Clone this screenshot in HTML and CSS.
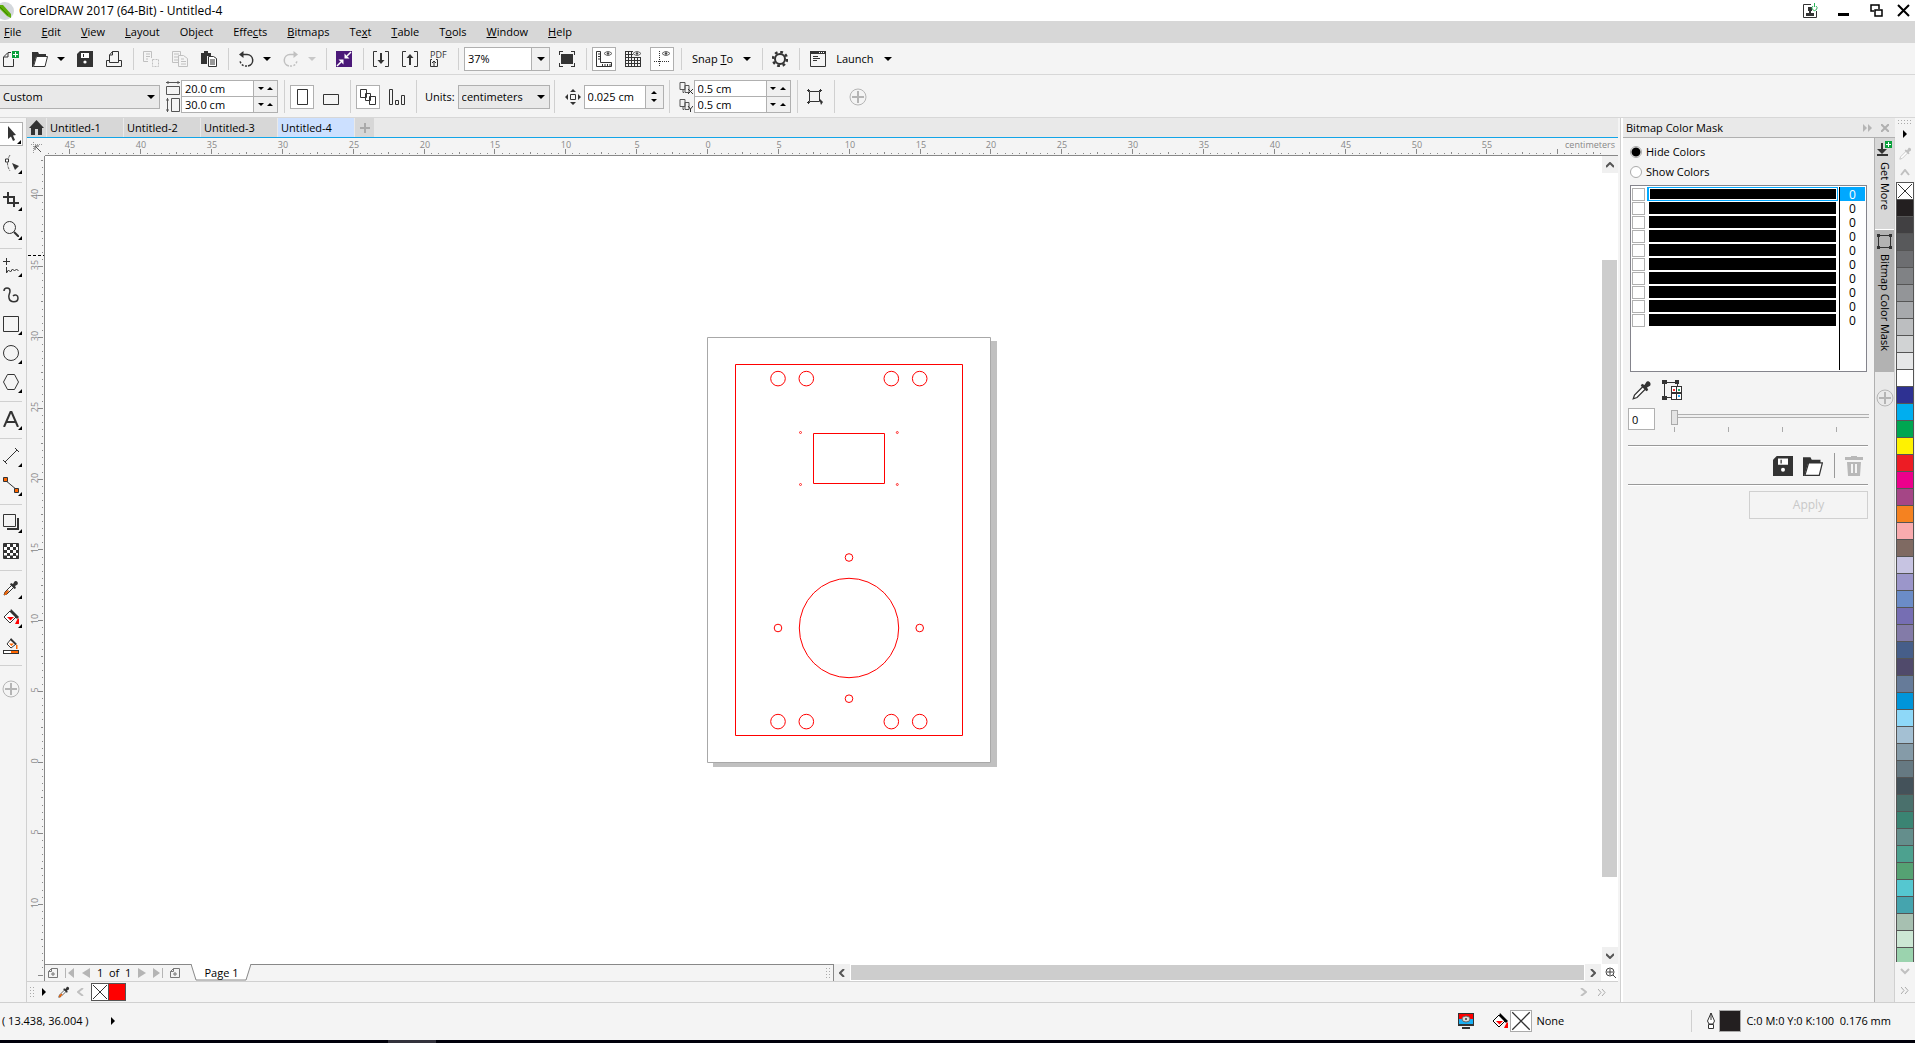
FILE: index.html
```html
<!DOCTYPE html>
<html lang="en">
<head>
<meta charset="utf-8">
<title>CorelDRAW 2017 (64-Bit) - Untitled-4</title>
<link rel="stylesheet" href="styles.css">
</head>
<body>
<svg class="defs" aria-hidden="true">
  <symbol id="i-dropper" viewBox="0 0 16 16"><path d="M1 15l1-3 7-7 2 2-7 7z" fill="#fff" stroke="currentColor"/><path d="M8 3l2 1 1.500-2.500c1-1.500 4.500.500 3 3L12 6l1 2-1.500 1L7 4.500z" fill="currentColor"/></symbol>
  <symbol id="i-save" viewBox="0 0 16 16"><path d="M3 0h13v16H0V3z" fill="currentColor"/><path d="M4 2h8v5H4z" fill="#fff"/><path d="M6 3h1v3H6z" fill="currentColor"/><circle cx="8" cy="11" r="1.600" fill="#fff"/></symbol>
  <symbol id="i-open" viewBox="0 0 16 16"><path d="M0 1h6l1 2h7v3H4L1 16H0z" fill="currentColor"/><path d="M4.500 5.500h11l-2.500 10H1.500z" fill="#fff" stroke="currentColor"/></symbol>
  <symbol id="i-fill" viewBox="0 0 16 16"><path d="M7 2l6 6-6 6-6-6z" fill="#fff" stroke="currentColor"/><path d="M8 0l8 8-2 2-7-7z" fill="currentColor"/><path d="M4 8h7l-3.500 3.500z" fill="#f00"/><path d="M15 9l1 1v5h-4z" fill="#f00"/></symbol>
  <symbol id="i-plus" viewBox="0 0 18 18"><circle cx="9" cy="9" r="8" fill="none" stroke="#b5b5b5"/><path d="M9 3v12M3 9h12" stroke="#b5b5b5" stroke-width="2"/></symbol>
  <symbol id="i-none" viewBox="0 0 16 16"><path d="M0 0h16v16H0z" fill="#fff"/><path d="M1 1l14 14M15 1L1 15" stroke="#333"/></symbol>
  <symbol id="i-addpage" viewBox="0 0 10 10"><path d="M3.500.500h6v9h-9v-6zM3.500.500v3h-3M5 4v4M3 6h4" fill="none" stroke="#777"/></symbol>
  <symbol id="i-dup" viewBox="0 0 14 13"><path d="M1 1h5v7H1zM4 8v3h1M6 4h4v7H6z" fill="none" stroke="#555"/></symbol>
</svg>

<header class="titlebar">
  <svg class="logo" viewBox="0 0 14 18"><circle cx="5" cy="9" r="9" fill="#d4d8dc"/><path d="M-2 3L3 3l8 9v4l-4-2-8-8z" fill="#5cad08"/><path d="M0 5l8 8" stroke="#3d8500"/></svg>
  <h1 class="title">CorelDRAW 2017 (64-Bit) - Untitled-4</h1>
  <div class="window-buttons">
    <button aria-label="Account"><svg width="15" height="16" viewBox="0 0 15 16"><path d="M8 1.500H.500v13h13V8" fill="none" stroke="#333"/><path d="M5 4h4v4H8v2h3v3H3v-3h3V8H5z" fill="#333"/><path d="M10 3a2.500 2.500 0 1 0 3 0M11.500 0v4" fill="none" stroke="#2bb45a"/></svg></button>
    <button aria-label="Minimize"><svg width="12" height="14"><path d="M0 9h11v3H0z"/></svg></button>
    <button aria-label="Restore"><svg width="13" height="14"><path d="M4 7H1V1h8v4M5 6h7v6H5z" fill="none" stroke="#000" stroke-width="1.500"/></svg></button>
    <button class="close" aria-label="Close"><svg width="13" height="14"><path d="M1 1l11 11M12 1L1 12" stroke="#000" stroke-width="2"/></svg></button>
  </div>
</header>

<nav class="menubar">
  <button><u>F</u>ile</button><button><u>E</u>dit</button><button><u>V</u>iew</button><button><u>L</u>ayout</button><button>Ob<u>j</u>ect</button><button>Effe<u>c</u>ts</button><button><u>B</u>itmaps</button><button>Te<u>x</u>t</button><button><u>T</u>able</button><button>T<u>o</u>ols</button><button><u>W</u>indow</button><button><u>H</u>elp</button>
</nav>

<div class="toolbar">
  <button class="icon edge" aria-label="New"><svg viewBox="0 0 16 16"><path d="M8 1.500H5L.500 6v9.500h10V8M5 2v4H1" fill="none" stroke="currentColor"/><path d="M9 0h7v7H9z" fill="#0aa03c"/><path d="M12.500 1v5M10 3.500h5" stroke="#fff"/></svg></button>
  <button class="icon" aria-label="Open"><svg><use href="#i-open"/></svg></button><button class="drop" aria-label="Recent files"></button>
  <button class="icon" aria-label="Save"><svg><use href="#i-save"/></svg></button>
  <button class="icon" aria-label="Print"><svg viewBox="0 0 16 16"><path d="M3.500 10V4l3-3.500h6V10M6.500.500V4h-3M.500 9.500v6h15v-6h-3v2h-9v-2z" fill="none" stroke="currentColor"/></svg></button>
  <i class="sep"></i>
  <button class="icon off" aria-label="Cut"><svg viewBox="0 0 16 16"><path d="M.500.500h8V7M.500.500v10H5M3 3h4M3 5.500h4M3 8h2" fill="none" stroke="currentColor"/><path d="M9.500 8.500h6v7h-6z" fill="none" stroke="currentColor" stroke-dasharray="2 1"/></svg></button>
  <button class="icon off" aria-label="Copy"><svg viewBox="0 0 16 16"><path d="M6 11.500H.500V.500h8V4M2 3h5M2 6h4M2 9h4M6.500 4.500h5l4 3v8h-9zM9 8h3M9 10.500h5M9 13h5" fill="none" stroke="currentColor"/></svg></button>
  <button class="icon" aria-label="Paste"><svg viewBox="0 0 16 16"><path d="M0 2h3V0h4v2h3v3H6v8H0z" fill="currentColor"/><path d="M7.500 5.500h5l3 2v8h-8zM9 9h5M9 11h5M9 13h5" fill="#fff" stroke="currentColor"/></svg></button>
  <i class="sep"></i>
  <button class="icon" aria-label="Undo"><svg viewBox="0 0 16 16"><path d="M4 3.500h5a5.800 5.800 0 0 1 1 11.500" fill="none" stroke="currentColor" stroke-width="1.500"/><path d="M9 15A6 6 0 0 1 2 9" fill="none" stroke="currentColor" stroke-width="1.500" stroke-dasharray="2 1.500"/><path d="M5.500 0v7L1 3.500z" fill="currentColor"/></svg></button><button class="drop" aria-label="Undo history"></button>
  <button class="icon off" aria-label="Redo"><svg viewBox="0 0 16 16"><path d="M12 3.500H7A5.800 5.800 0 0 0 6 15" fill="none" stroke="currentColor" stroke-width="1.500"/><path d="M7 15a6 6 0 0 0 7-6" fill="none" stroke="currentColor" stroke-width="1.500" stroke-dasharray="2 1.500"/><path d="M10.500 0v7L15 3.500z" fill="currentColor"/></svg></button><button class="drop off" aria-label="Redo history"></button>
  <i class="sep"></i>
  <button class="icon" aria-label="Search content"><svg viewBox="0 0 16 16"><path d="M0 0h16v16H0z" fill="#4b1979"/><path d="M15 1l-4 4M1 15l4-4" stroke="#fff" stroke-width="1.500"/><path d="M8.500 2.500v5h5zM7.500 13.500v-5h-5z" fill="#fff"/></svg></button>
  <i class="sep"></i>
  <button class="icon" aria-label="Import"><svg viewBox="0 0 16 16"><path d="M4 .500H.500v15H4M12 .500h3.500v15H12" fill="none" stroke="currentColor"/><path d="M8 2v8" stroke="currentColor" stroke-width="2"/><path d="M4.500 9h7L8 13z" fill="currentColor"/></svg></button>
  <button class="icon" aria-label="Export"><svg viewBox="0 0 16 16"><path d="M4 .500H.500v15H4M12 .500h3.500v15H12" fill="none" stroke="currentColor"/><path d="M8 14V6" stroke="currentColor" stroke-width="2"/><path d="M4.500 7h7L8 3z" fill="currentColor"/></svg></button>
  <button class="icon pdf" aria-label="Publish to PDF"><span>PDF</span><svg viewBox="0 0 8 8"><path d="M2 .500H.500v7h7v-7H6M4 7V2M2 4l2-2 2 2" fill="none" stroke="currentColor"/></svg></button>
  <i class="sep"></i>
  <div class="combo zoom"><input aria-label="Zoom level" value="37%"><button class="drop" aria-label="Zoom levels"></button></div>
  <button class="icon" aria-label="Full-screen preview"><svg viewBox="0 0 16 16"><path d="M2 3h12v10H2z" fill="currentColor"/><path d="M0 .500h4M12 .500h4M0 15.500h4M12 15.500h4M.500 0v4M15.500 0v4M.500 12v4M15.500 12v4" fill="none" stroke="currentColor"/></svg></button>
  <i class="sep"></i>
  <button class="icon on" aria-label="Show rulers"><svg viewBox="0 0 16 16"><path d="M.500.500h4v11h11v4H.500zM2 3h2M2 5.500h2M2 8h2M6.500 13v2M9 13v2M11.500 13v2M14 13v2" fill="none" stroke="currentColor"/><path d="M8 2.500q4-4 8 0-4 4-8 0z" fill="none" stroke="#666"/><circle cx="12" cy="2.500" r="1.300" fill="#444"/></svg></button>
  <button class="icon" aria-label="Show grid"><svg viewBox="0 0 16 16"><path d="M.500.500H8M.500 3.500H8M.500 6.500h15M.500 9.500h15M.500 12.500h15M.500 15.500h15M.500 0v16M3.500 0v16M6.500 0v16M9.500 6v10M12.500 6v10M15.500 6v10" fill="none" stroke="currentColor"/><path d="M8 2.500q4-4 8 0-4 4-8 0z" fill="#fff" stroke="#666"/><circle cx="12" cy="2.500" r="1.300" fill="#444"/></svg></button>
  <button class="icon on" aria-label="Show guidelines"><svg viewBox="0 0 16 16"><path d="M5.500 0v16M0 10.500h16" fill="none" stroke="currentColor" stroke-dasharray="1 1"/><path d="M8 2.500q4-4 8 0-4 4-8 0z" fill="none" stroke="#666"/><circle cx="12" cy="2.500" r="1.300" fill="#444"/></svg></button>
  <i class="sep"></i>
  <button class="labelled"><span>Snap <u>T</u>o</span><i class="tri"></i></button>
  <i class="sep"></i>
  <button class="icon" aria-label="Options"><svg viewBox="0 0 16 16"><circle cx="8" cy="8" r="5" fill="none" stroke="currentColor" stroke-width="2"/><circle cx="8" cy="8" r="7" fill="none" stroke="currentColor" stroke-width="2.500" stroke-dasharray="2.750 2.750"/></svg></button>
  <i class="sep"></i>
  <button class="labelled"><svg viewBox="0 0 16 16"><path d="M.500.500h15v15H.500z" fill="none" stroke="currentColor"/><path d="M0 0h16v3H0z" fill="currentColor"/><path d="M3 5.500h5M3 7.500h7M3 9.500h4" stroke="currentColor"/><path d="M9 1.500h1M11 1.500h1M13 1.500h1" stroke="#fff"/></svg><span>Launch</span><i class="tri"></i></button>
</div>

<div class="propbar">
  <div class="select preset"><select aria-label="Page size"><option>Custom</option></select></div>
  <div class="pair-icons"><svg viewBox="0 0 14 14"><path d="M0 1.500h14M2 0v3M12 0v3M.500 5.500h13v8H.500z" fill="none" stroke="#555"/></svg><svg viewBox="0 0 14 14"><path d="M1.500 0v14M0 2h3M0 12h3M5.500.500h8v13h-8z" fill="none" stroke="#555"/></svg></div>
  <div class="pair"><label><input aria-label="Page width" value="20.0 cm"><span class="spin"></span></label><label><input aria-label="Page height" value="30.0 cm"><span class="spin"></span></label></div>
  <i class="sep"></i>
  <button class="icon on" aria-label="Portrait"><svg viewBox="0 0 16 16"><path d="M3.500 .500h10v15h-10z" fill="none" stroke="currentColor"/></svg></button>
  <button class="icon" aria-label="Landscape"><svg viewBox="0 0 16 16"><path d="M.500 5.500h15v10H.500z" fill="none" stroke="currentColor"/></svg></button>
  <i class="sep"></i>
  <button class="icon on" aria-label="All pages"><svg viewBox="0 0 16 16"><path d="M.500.500h6v8h-6zM5.500 4.500h5v7h-5zM9.500 7.500h6v8h-6z" fill="#fff" stroke="currentColor"/></svg></button>
  <button class="icon" aria-label="Current page"><svg viewBox="0 0 16 16"><path d="M.500.500h3v15h-3zM6.500 11.500h3v4h-3zM12.500 6.500h3v9h-3z" fill="none" stroke="currentColor"/></svg></button>
  <i class="sep"></i>
  <label class="field" for="units">Units:</label>
  <div class="select units"><select id="units"><option>centimeters</option></select></div>
  <i class="sep"></i>
  <svg class="glyph" viewBox="0 0 16 16"><path d="M5.500 5.500h5v5h-5z" fill="none" stroke="#333"/><path d="M8 0l3 3H5zM8 16l3-3H5zM0 8l3-3v6zM16 8l-3-3v6z" fill="#333"/></svg>
  <div class="combo nudge"><input aria-label="Nudge distance" value="0.025 cm"><span class="spin tall"></span></div>
  <i class="sep"></i>
  <div class="pair-icons"><svg viewBox="0 0 14 14"><use href="#i-dup"/><path d="M9 8l5 5M14 8l-5 5" stroke="#333"/></svg><svg viewBox="0 0 14 14"><use href="#i-dup"/><path d="M9 8l2.500 3L14 8M11.500 11v3" fill="none" stroke="#333"/></svg></div>
  <div class="pair"><label><input aria-label="Duplicate distance X" value="0.5 cm"><span class="spin"></span></label><label><input aria-label="Duplicate distance Y" value="0.5 cm"><span class="spin"></span></label></div>
  <i class="sep"></i>
  <button class="icon" aria-label="Treat as filled"><svg viewBox="0 0 16 16"><path d="M2.500 2.500h10v10h-10z" fill="none" stroke="currentColor"/><path d="M0 1.500h3M1.500 0v3M12 1.500h3M13.500 0v3M0 13.500h3M1.500 12v3" stroke="currentColor"/><path d="M12 9l4 4-2 3z" fill="currentColor"/></svg></button>
  <i class="sep"></i>
  <button class="icon roomy" aria-label="Customize"><svg class="plus"><use href="#i-plus"/></svg></button>
</div>

<main class="workspace">
  <aside class="toolbox">
    <button class="icon on fly" aria-label="Pick"><svg viewBox="0 0 16 16"><path d="M5 0l8 9-3 .500L12 14l-2 1-2-4.500L5 13z" fill="currentColor"/></svg></button>
    <button class="icon fly" aria-label="Shape"><svg viewBox="0 0 16 16"><path d="M7 0Q2 8 7 16" fill="none" stroke="#666" stroke-dasharray="3 1"/><path d="M2.500 4h3v3h-3z" fill="#fff" stroke="currentColor"/><path d="M9 8l7 3-4 4z" fill="currentColor"/></svg></button>
    <i class="sep"></i>
    <button class="icon fly" aria-label="Crop"><svg viewBox="0 0 16 16"><path d="M0 5h11v10M16 11H5V5M5 0v5M11 11h5M5 11h6" fill="none" stroke="currentColor" stroke-width="2"/></svg></button>
    <button class="icon fly" aria-label="Zoom"><svg viewBox="0 0 16 16"><circle cx="6.500" cy="6.500" r="6" fill="none" stroke="currentColor"/><path d="M11 11l5 5" stroke="currentColor" stroke-width="2"/></svg></button>
    <i class="sep"></i>
    <button class="icon fly" aria-label="Freehand"><svg viewBox="0 0 16 16"><path d="M3.500 0v7M0 3.500h7M3.500 9v6l2-3 2 2 2-3 2 2 2-2 2 2" fill="none" stroke="currentColor"/></svg></button>
    <button class="icon" aria-label="Artistic media"><svg viewBox="0 0 16 16"><path d="M1 4c0-4 6-4 6 0 0 3-2 4-1 7 1 5 9 5 9 0 0-3-3-4-5-2" fill="none" stroke="currentColor" stroke-width="1.500"/></svg></button>
    <button class="icon fly" aria-label="Rectangle"><svg viewBox="0 0 16 16"><path d="M.500.500h15v15H.500z" fill="none" stroke="currentColor"/></svg></button>
    <button class="icon fly" aria-label="Ellipse"><svg viewBox="0 0 16 16"><circle cx="8" cy="8" r="7.500" fill="none" stroke="currentColor"/></svg></button>
    <button class="icon fly" aria-label="Polygon"><svg viewBox="0 0 16 16"><path d="M4.500.500h7l4 7.500-4 7.500h-7L.500 8z" fill="none" stroke="currentColor"/></svg></button>
    <i class="sep"></i>
    <button class="icon fly" aria-label="Text"><svg viewBox="0 0 16 16"><path d="M1 16L7.500 1h1L15 16M3.500 11h9" fill="none" stroke="currentColor" stroke-width="2"/></svg></button>
    <i class="sep"></i>
    <button class="icon fly" aria-label="Dimension"><svg viewBox="0 0 16 16"><path d="M2 14L14 2M0 12l4 4M12 0l4 4" stroke="currentColor"/></svg></button>
    <button class="icon fly" aria-label="Connector"><svg viewBox="0 0 16 16"><path d="M2 3l12 10" stroke="currentColor"/><path d="M.500.500h4v4h-4zM11.500 11.500h4v4h-4z" fill="#f60" stroke="currentColor"/></svg></button>
    <i class="sep"></i>
    <button class="icon fly" aria-label="Drop shadow"><svg viewBox="0 0 16 16"><path d="M4 15h11V4" fill="none" stroke="currentColor" stroke-width="2"/><path d="M.500.500h12v12H.500z" fill="#f4f4f4" stroke="currentColor"/></svg></button>
    <button class="icon" aria-label="Transparency"><svg viewBox="0 0 16 16"><path d="M.500.500h15v15H.500z" fill="#fff" stroke="currentColor"/><path d="M1 2.500h15M1 8.500h15M1 14h15" stroke="currentColor" stroke-width="3" stroke-dasharray="3 3"/><path d="M4 5.500h12M4 11.500h12" stroke="currentColor" stroke-width="3" stroke-dasharray="3 3"/></svg></button>
    <i class="sep"></i>
    <button class="icon fly" aria-label="Color eyedropper"><svg viewBox="0 0 16 16"><use href="#i-dropper"/><path d="M1 15l1-3 3-2 1 1-3 4z" fill="#e8630a"/></svg></button>
    <button class="icon fly" aria-label="Interactive fill"><svg><use href="#i-fill"/></svg></button>
    <button class="icon" aria-label="Smart fill"><svg viewBox="0 0 16 16"><path d="M8 1l5 5-5 4-4-4z" fill="#fff" stroke="currentColor"/><path d="M8 0l6 6-1.500 1L7 2zM0 12h16v4H0z" fill="currentColor"/><path d="M6 5.500h5L8.500 8zM13 7h1.500v4H13z" fill="#f60"/><path d="M1 13h7v2H1z" fill="#fff"/><path d="M8 13h7v2H8z" fill="#f60"/></svg></button>
    <i class="sep"></i>
    <button class="icon gap" aria-label="Customize toolbox"><svg class="plus"><use href="#i-plus"/></svg></button>
  </aside>

  <section class="document">
    <div class="tabs">
      <button class="home" aria-label="Welcome screen"><svg width="15" height="15" viewBox="0 0 15 15"><path d="M7.500 0L15 8h-2v7H9V9H6v6H2V8H0z" fill="#333"/></svg></button>
      <button>Untitled-1</button><button>Untitled-2</button><button>Untitled-3</button><button class="active">Untitled-4</button>
      <button class="add" aria-label="New document"><svg width="10" height="10"><path d="M5 0v10M0 5h10" stroke="#aaa" stroke-width="2"/></svg></button>
    </div>
    <div class="stage">
      <div class="corner"><svg width="12" height="12"><path d="M0 2.500h12M2.500 0v12" stroke="#999" stroke-dasharray="1 1"/><path d="M4 4l6 6M4 4h4M4 4v4" stroke="#555" fill="none"/></svg></div>
      <div class="ruler-h"><svg id="ruler-h"></svg><span>centimeters</span></div>
      <svg class="ruler-v" id="ruler-v"></svg>
      <svg class="canvas">
        <path d="M668 185h284v426H668z" fill="#c0c0c0"/>
        <path d="M662.500 181.500h283v425h-283z" fill="#fff" stroke="#a8a8a8"/>
        <g fill="none" stroke="#f00">
          <path d="M690.500 208.500h227v371h-227zM768.500 277.500h71v50h-71z"/>
          <circle cx="733" cy="222.600" r="7.300"/><circle cx="761.300" cy="222.600" r="7.300"/><circle cx="846.300" cy="222.600" r="7.300"/><circle cx="874.700" cy="222.600" r="7.300"/>
          <circle cx="733" cy="565.600" r="7.300"/><circle cx="761.300" cy="565.600" r="7.300"/><circle cx="846.300" cy="565.600" r="7.300"/><circle cx="874.700" cy="565.600" r="7.300"/>
          <circle cx="804" cy="472" r="49.700"/>
          <circle cx="804" cy="401.500" r="3.800"/><circle cx="804" cy="542.700" r="3.800"/><circle cx="733" cy="472" r="3.800"/><circle cx="874.700" cy="472" r="3.800"/>
          <g stroke-width=".8"><circle cx="755.500" cy="276.500" r="1"/><circle cx="852.300" cy="276.500" r="1"/><circle cx="755.500" cy="328.500" r="1"/><circle cx="852.300" cy="328.500" r="1"/></g>
        </g>
      </svg>
      <div class="vscroll">
        <button aria-label="Scroll up"><svg width="8" height="6"><path d="M0 5l4-4 4 4" class="chev"/></svg></button>
        <div class="track"><div class="thumb"></div></div>
        <button aria-label="Scroll down"><svg width="8" height="6"><path d="M0 1l4 4 4-4" class="chev"/></svg></button>
      </div>
      <div class="bottom">
        <div class="pages">
          <button aria-label="Add page before"><svg width="10" height="10"><use href="#i-addpage"/></svg></button>
          <button aria-label="First page"><svg width="10" height="10"><path d="M0 0h1v10H0zM9 0v10L3 5z" fill="#b5b5b5"/></svg></button>
          <button aria-label="Previous page"><svg width="8" height="10"><path d="M8 0v10L0 5z" fill="#b5b5b5"/></svg></button>
          <span class="count">1&nbsp; of &nbsp;1</span>
          <button aria-label="Next page"><svg width="8" height="10"><path d="M0 0v10l8-5z" fill="#b5b5b5"/></svg></button>
          <button aria-label="Last page"><svg width="10" height="10"><path d="M9 0h1v10H9zM0 0v10l7-5z" fill="#b5b5b5"/></svg></button>
          <button aria-label="Add page after"><svg width="10" height="10"><use href="#i-addpage"/></svg></button>
          <button class="page-tab"><svg width="61" height="17"><path d="M0 0l5 16h50L60 0" fill="#fff" stroke="#888"/></svg><span>Page 1</span></button>
          <i class="grip"></i>
        </div>
        <div class="hscroll">
          <button aria-label="Scroll left"><svg width="6" height="8"><path d="M5 0L1 4l4 4" class="chev"/></svg></button>
          <div class="thumb"></div>
          <button aria-label="Scroll right"><svg width="6" height="8"><path d="M1 0l4 4-4 4" class="chev"/></svg></button>
          <button class="nav" aria-label="Navigator"><svg width="11" height="11"><circle cx="5" cy="5" r="4" fill="none" stroke="#444"/><path d="M5 2v6M2 5h6M8 8l3 3" stroke="#444"/></svg></button>
        </div>
      </div>
    </div>
    <div class="doc-palette">
      <i class="grip"></i>
      <button aria-label="Palette menu"><svg width="4" height="8"><path d="M0 0v8l4-4z"/></svg></button>
      <button class="dp" aria-label="Eyedropper"><svg width="12" height="12" viewBox="0 0 16 16"><use href="#i-dropper"/><path d="M1 15l1-3 3-2 1 1-3 4z" fill="#e8630a"/></svg></button>
      <button aria-label="Scroll palette left"><svg width="7" height="8"><path d="M6 0L1 4l5 4" class="chev pale"/></svg></button>
      <div class="doc-swatches"><button aria-label="No color"><svg width="16" height="16"><use href="#i-none"/></svg></button><button class="red" aria-label="Red"></button></div>
      <button class="push" aria-label="Scroll palette right"><svg width="7" height="8"><path d="M1 0l5 4-5 4" class="chev pale"/></svg></button>
      <button aria-label="Expand palette"><svg width="8" height="7"><path d="M0 0l3 3.500L0 7M4 0l3 3.500L4 7" fill="none" stroke="#aaa"/></svg></button>
    </div>
  </section>

  <section class="docker">
    <div class="docker-title"><h2>Bitmap Color Mask</h2>
      <button aria-label="Collapse docker"><svg width="9" height="8"><path d="M0 0l4 4-4 4zM5 0l4 4-4 4z" fill="#b5b5b5"/></svg></button>
      <button aria-label="Close docker"><svg width="8" height="8"><path d="M0 0l8 8M8 0L0 8" stroke="#b0b0b0" stroke-width="2"/></svg></button>
    </div>
    <div class="docker-main">
      <form class="mask">
        <label class="radio"><input type="radio" name="mode" checked>Hide Colors</label>
        <label class="radio"><input type="radio" name="mode">Show Colors</label>
        <div class="mask-list" id="mask-list"></div>
        <div class="mask-tools">
          <button type="button" aria-label="Color selector"><svg width="20" height="20"><use href="#i-dropper"/></svg></button>
          <button type="button" aria-label="Edit color"><svg width="20" height="20"><path d="M2.500 2.500h13v15h-13z" fill="none" stroke="#333"/><path d="M0 0h5v4H0zM13 0h4v4h-4zM0 16h5v4H0zM9 6h11v14H9z" fill="#333"/><path d="M10 7h4v5h-4zM15 7h4v5h-4zM10 14h4v5h-4zM15 14h4v5h-4z" fill="#fff"/><path d="M11 9h2v2h-2z" fill="#f33"/><path d="M16 9h2v2h-2z" fill="#2a6"/><path d="M16 15h2v2h-2z" fill="#2af"/></svg></button>
        </div>
        <div class="tolerance">
          <input class="value" aria-label="Tolerance" value="0">
          <div class="slider"><input type="range" aria-label="Tolerance slider" min="0" max="100" value="0"><div class="ticks"><i></i><i></i><i></i><i></i></div></div>
        </div>
        <hr>
        <div class="mask-files">
          <button type="button" aria-label="Save mask"><svg width="20" height="20"><use href="#i-save"/></svg></button>
          <button type="button" aria-label="Open mask"><svg width="20" height="20"><use href="#i-open"/></svg></button>
          <i></i>
          <button type="button" aria-label="Delete mask"><svg width="18" height="20"><path d="M6 0h6v1h6v3H0V1h6zM2 6h14l-1 14H3z" fill="#b8b8b8"/><path d="M7 8v9M11 8v9" stroke="#f4f4f4" stroke-width="2"/></svg></button>
        </div>
        <hr>
        <button type="button" class="apply" disabled>Apply</button>
      </form>
      <div class="docker-tabs">
        <button class="more"><svg width="15" height="16"><path d="M5 2v8M0 14h11" stroke="#333" stroke-width="2"/><path d="M0 8h10l-5 5z" fill="#333"/><path d="M8 0h7v7H8z" fill="#0aa03c"/><path d="M11.500 1v5M9 3.500h5" stroke="#fff"/></svg><span>Get More</span></button>
        <button class="current"><svg width="15" height="15"><path d="M1.500 1.500h12v12h-12z" fill="none" stroke="#333"/><path d="M0 0h3v3H0zM12 0h3v3h-3zM0 12h3v3H0zM12 12h3v3h-3z" fill="#333"/></svg><span>Bitmap Color Mask</span></button>
        <button class="quick" aria-label="Customize dockers"><svg class="plus"><use href="#i-plus"/></svg></button>
      </div>
    </div>
  </section>

  <aside class="palette">
    <i class="grip wide"></i>
    <button aria-label="Palette menu"><svg width="4" height="8"><path d="M0 0v8l4-4z"/></svg></button>
    <button class="off" aria-label="Palette eyedropper"><svg width="13" height="13" viewBox="0 0 16 16"><use href="#i-dropper"/></svg></button>
    <button aria-label="Scroll up"><svg width="10" height="7"><path d="M1 6l4-5 4 5" class="chev pale"/></svg></button>
    <div class="swatches" id="swatches"><button aria-label="No color"><svg width="16" height="16"><use href="#i-none"/></svg></button></div>
    <button aria-label="Scroll down"><svg width="10" height="7"><path d="M1 1l4 4 4-4" class="chev pale"/></svg></button>
    <button aria-label="Expand"><svg width="8" height="7"><path d="M0 0l3 3.500L0 7M4 0l3 3.500L4 7" fill="none" stroke="#aaa"/></svg></button>
  </aside>
</main>

<footer class="status">
  <span class="coords">( 13.438, 36.004 )</span>
  <button class="expand" aria-label="Status details"><svg width="4" height="8"><path d="M0 0v8l4-4z"/></svg></button>
  <svg class="proof" width="16" height="16"><path d="M0 0h16v13H0zM4 14h8v2H4z" fill="#333"/><path d="M1 1h14v5H1z" fill="#f00"/><path d="M1 6h14v5H1z" fill="#1ab0f4"/><ellipse cx="8" cy="6" rx="4" ry="3" fill="#ddd" stroke="#666"/><circle cx="8" cy="6" r="1" fill="#333"/></svg>
  <div class="fill-info"><svg width="16" height="16"><use href="#i-fill"/></svg><i class="chip"><svg width="20" height="20"><use href="#i-none"/></svg></i><span>None</span></div>
  <div class="pen-info"><svg width="10" height="16"><path d="M5 0l3.500 8L7 11H3L1.500 8zM5 0v7M2.500 11.500h5v4h-5z" fill="#fff" stroke="#333"/></svg><i class="chip dark"></i><span>C:0 M:0 Y:0 K:100&nbsp; 0.176 mm</span></div>
</footer>
<div class="taskbar"></div>
<script src="script.js"></script>
</body>
</html>
```
FILE: styles.css
```css
* { box-sizing: border-box; }

body {
  margin: 0;
  height: 100vh;
  display: flex;
  flex-direction: column;
  overflow: hidden;
  background: #f4f4f4;
  color: #000;
  font: 11px/16px "Open Sans", "Noto Sans", sans-serif;
}

button, input, select { font: inherit; color: inherit; }
button { padding: 0; border: 0; background: none; display: flex; align-items: center; justify-content: center; }
button, svg { flex: none; }
input, select { padding: 0; border: 0; border-radius: 0; background: none; min-width: 0; outline: 0; }
h1, h2 { margin: 0; font-size: 11px; line-height: 16px; font-weight: 400; }
.defs { display: none; }
.chev { fill: none; stroke: #555; stroke-width: 2; }
.chev.pale { stroke: #c0c0c0; }

.titlebar { display: flex; align-items: center; height: 21px; background: #fff; }
.title { margin-left: 5px; font-size: 12px; }
.logo { width: 14px; height: 18px; }
.window-buttons { display: flex; align-items: center; gap: 20px; margin-left: auto; padding-right: 5px; }
.close { margin-left: -6px; }

.menubar { display: flex; gap: 20px; height: 22px; padding-left: 4px; background: #d7d7d7; }

.toolbar, .propbar { display: flex; align-items: center; border-bottom: 1px solid #d7d7d7; color: #333; }
.toolbar { height: 32px; }
.propbar { height: 43px; padding-top: 1px; }
.sep { flex: none; width: 1px; height: 22px; margin: 0 3px 0 4px; background: #d0d0d0; }
.propbar .sep { height: 33px; }
.icon { position: relative; width: 24px; height: 24px; margin: 0 3px 0 2px; color: #333; }
.icon svg { width: 16px; height: 16px; }
.icon svg.plus, .quick svg { width: 18px; height: 18px; }
.icon.edge { width: 22px; margin: 0 4px 0 0; }
.icon.on { border: 1px solid #b0b0b0; background: #fff; }
.icon.roomy { margin: 0 8px; }
.icon.off, .off { color: #c0c0c0; }
.drop { width: 12px; height: 22px; margin-right: 4px; }
.drop::before, .tri, .select::after {
  content: ""; border: 4px solid transparent; border-top-color: #000; border-bottom: 0;
}
.drop.off::before { border-top-color: #c8c8c8; }
.pdf { flex-direction: column; align-items: flex-start; padding-left: 3px; font-size: 9px; line-height: 9px; }
.pdf.icon svg { width: 8px; height: 8px; }
.labelled { padding: 0 7px; gap: 10px; color: #000; white-space: pre; }
.labelled svg { width: 16px; height: 16px; color: #333; }

.combo { display: flex; height: 24px; border: 1px solid #b0b0b0; background: #fff; color: #000; }
.combo input { flex: 1; padding-left: 3px; }
.zoom { width: 86px; margin: 0 3px 0 2px; }
.zoom .drop { width: 18px; margin: 0; background: #f0f0f0; border-left: 1px solid #b0b0b0; }
.nudge { width: 80px; }

.select { position: relative; height: 24px; border: 1px solid #b0b0b0; background: #e9e9e9; color: #000; }
.select select { width: 100%; height: 100%; padding-left: 3px; appearance: none; }
.select::after { position: absolute; right: 4px; top: 9px; }
.preset { width: 160px; border-left: 0; }
.units { width: 92px; }
.field { margin: 0 3px 0 5px; color: #000; }
.pair-icons { display: flex; flex-direction: column; gap: 3px; width: 14px; margin: 0 1px 0 6px; }
.pair-icons svg { width: 14px; height: 14px; }
.pair { display: flex; flex-direction: column; width: 97px; margin-right: 2px; border: 1px solid #b0b0b0; background: #fff; color: #000; }
.pair label { display: flex; height: 15px; }
.pair label + label { height: 16px; border-top: 1px solid #b0b0b0; }
.pair input { flex: 1; padding-left: 3px; }
.spin { display: flex; align-items: center; justify-content: space-evenly; width: 24px; border-left: 1px solid #b0b0b0; background: #f0f0f0; }
.spin::before, .spin::after { content: ""; border: 3px solid transparent; }
.spin::before { border-top-color: #000; border-bottom: 0; }
.spin::after { border-bottom-color: #000; border-top: 0; }
.spin.tall { flex-direction: column-reverse; width: 18px; }
.glyph { width: 16px; height: 16px; margin: 0 3px 0 7px; }
.nudge + .sep { margin-left: 5px; }

.workspace { flex: 1; display: flex; min-height: 0; border-bottom: 1px solid #d0d0d0; }
.toolbox { display: flex; flex-direction: column; width: 27px; padding-top: 2px; border-right: 1px solid #d0d0d0; }
.toolbox .icon { margin: 2px 3px 3px -1px; }
.toolbox .sep { width: 22px; height: 1px; margin: 4px 0 3px; }
.toolbox .icon.gap { margin-top: 8px; }
.fly::after { content: ""; position: absolute; right: 1px; bottom: 1px; border: 2px solid #000; border-top-color: transparent; border-left-color: transparent; }

.document { flex: 1; display: flex; flex-direction: column; min-width: 0; }
.tabs { display: flex; height: 20px; border-bottom: 1px solid #12a5e8; background: #e9e9e9; }
.tabs button { width: 76px; padding-left: 3px; margin-right: 1px; justify-content: flex-start; background: #d7d7d7; }
.tabs .home { width: 19px; padding: 0; justify-content: center; }
.tabs .active { background: #cce0ff; }
.tabs .add { width: 19px; padding: 0; justify-content: center; }

.stage { flex: 1; display: grid; grid-template-columns: 18px 1fr 16px; grid-template-rows: 18px 1fr 17px; min-height: 0; background: #fff; }
.corner { background: #f4f4f4; padding: 4px 0 0 4px; line-height: 0; }
.ruler-h { grid-column: 2 / 4; position: relative; background: #f4f4f4; border-bottom: 1px solid #888; line-height: 0; }
.ruler-h svg { width: 100%; height: 17px; }
.ruler-h span { position: absolute; right: 3px; top: 1px; background: #f4f4f4; font-size: 9px; line-height: 12px; color: #888; }
.ruler-v { grid-row: 2 / 4; grid-column: 1; width: 100%; height: 100%; background: #f4f4f4; border-right: 1px solid #888; }
.stage text { font-size: 9px; fill: #888; text-anchor: middle; }
.canvas { grid-column: 2; width: 100%; height: 100%; }
.vscroll { display: flex; flex-direction: column; }
.vscroll button, .hscroll button { width: 16px; height: 17px; background: #f0f0f0; }
.track { flex: 1; padding: 87px 0 70px; display: flex; }
.vscroll .thumb { width: 15px; background: #cdcdcd; }
.bottom { grid-column: 2 / 4; display: flex; background: #f4f4f4; }
.pages { flex: 1; display: flex; align-items: center; gap: 7px; padding-left: 3px; border: solid #888; border-width: 1px 1px 0 0; }
.count { width: 34px; text-align: center; white-space: nowrap; }
.page-tab { position: relative; width: 61px; height: 17px; margin: -1px 0 0 4px; }
.page-tab svg { position: absolute; left: 0; top: 0; }
.page-tab span { position: relative; }
.grip { margin: 0 2px 0 auto; width: 6px; height: 13px; background: radial-gradient(#aaa 1px, transparent 1px) 0 0 / 3px 3px; }
.hscroll { flex: 1; display: flex; background: #fff; }
.hscroll .thumb { flex: 1; height: 15px; margin: 1px; background: #cdcdcd; }
.hscroll .nav { background: #fff; margin-left: 1px; }

.doc-palette { display: flex; align-items: center; height: 21px; padding-right: 12px; gap: 7px; border-top: 1px solid #d0d0d0; }
.doc-palette .grip { margin: 0 0 0 2px; }
.doc-palette .dp { margin: 0 0 0 5px; color: #333; }
.doc-swatches { display: flex; height: 18px; border: 1px solid #555; }
.doc-swatches .red { width: 17px; background: #f00; border-left: 1px solid #555; }
.push { margin: 0 4px 0 auto; }

.docker { display: flex; flex-direction: column; width: 275px; border-left: 1px solid #d0d0d0; box-shadow: inset 2px 0 #fff; padding-left: 2px; margin-left: 2px; }
.docker-title { display: flex; align-items: center; gap: 9px; height: 20px; padding: 0 6px 0 3px; background: #e9e9e9; border-bottom: 1px solid #b0b0b0; }
.docker-title h2 { margin-right: auto; }
.docker-main { flex: 1; display: flex; }
.mask { flex: 1; display: flex; flex-direction: column; padding: 4px 6px 0 5px; }
.radio { display: flex; align-items: center; gap: 4px; height: 20px; margin-left: 2px; }
.radio input { appearance: none; width: 12px; height: 12px; margin: 0; border: 1px solid #aaa; border-radius: 50%; background: #fff; }
.radio input:checked { background: radial-gradient(#000 4px, #fff 5px); }
.mask-list { height: 187px; margin: 3px 1px 0 2px; padding: 1px; border: 1px solid #84848c; background: linear-gradient(#000, #000) 208px 1px / 1px 183px no-repeat #fff; }
.mask-row { display: flex; align-items: center; height: 14px; }
.mask-row input { appearance: none; width: 13px; height: 13px; margin: 0 2px 0 0; border: 1px solid #b0b0b0; }
.mask-row .bar { width: 191px; height: 14px; border: solid #fff; border-width: 1px 2px; background: #000; }
.mask-row .num { flex: 1; text-align: center; font-size: 12px; line-height: 15px; height: 14px; margin-left: 2px; }
.mask-row.selected .bar { border: 1px solid #00a8ff; border-left-width: 2px; box-shadow: inset 0 0 0 1px #fff; }
.mask-row.selected .num { background: #00a8ff; color: #fff; }
.mask-tools { display: flex; gap: 10px; height: 36px; padding: 8px 0 0 4px; color: #333; align-items: flex-start; }
.tolerance { display: flex; height: 37px; }
.value { width: 27px; height: 22px; padding-left: 3px; border: 1px solid #b0b0b0; background: #fff; }
.slider { flex: 1; margin: 2px -1px 0 16px; }
.slider input { appearance: none; display: block; width: 100%; height: 15px; margin: 0; background: linear-gradient(#b0b0b0 1px, #f0f0f0 1px 3px, #b0b0b0 3px) 0 4px / 100% 4px no-repeat; }
.slider input::-webkit-slider-thumb { appearance: none; width: 7px; height: 15px; border: 1px solid #aaa; background: #e4e4e4; }
.ticks { display: flex; gap: 53px; padding: 2px 3px; }
.ticks i { width: 1px; height: 5px; background: #aaa; }
hr { width: 100%; height: 2px; margin: 0; border: 0; background: #fff; border-top: 1px solid #999; }
.mask-files { display: flex; align-items: center; justify-content: flex-end; gap: 10px; height: 37px; padding-right: 5px; color: #333; }
.mask-files i { width: 1px; height: 25px; margin-left: 1px; background: #999; }
.apply { align-self: flex-end; width: 119px; height: 28px; margin-top: 5px; border: 1px solid #d0d0d0; color: #c8c8c8; font-size: 12px; }
.docker-tabs { display: flex; flex-direction: column; width: 21px; border-left: 1px solid #b0b0b0; border-right: 1px solid #d0d0d0; background: #e9e9e9; }
.docker-tabs button { flex-direction: column; justify-content: flex-start; gap: 5px; background: #d7d7d7; }
.docker-tabs span { writing-mode: vertical-rl; }
.more { height: 92px; padding-top: 3px; border-bottom: 1px solid #fff; }
.docker-tabs .current { height: 142px; padding-top: 4px; background: #b2b2b2; }
.docker-tabs .quick { padding-top: 17px; background: none; }

.palette { display: flex; flex-direction: column; align-items: center; width: 20px; padding-bottom: 2px; }
.palette .grip { width: 16px; height: 6px; margin: 1px 0 0; }
.palette > button { height: 18px; margin-bottom: 1px; }
.swatches { flex: 1; min-height: 0; overflow: hidden; width: 18px; margin-right: 1px; border: 1px solid #555; border-bottom: 0; }
.swatches button { width: 16px; height: 17px; border-bottom: 1px solid #555; }

.status { display: flex; align-items: center; height: 37px; padding: 0 24px 2px 0; }
.coords { width: 111px; padding-left: 2px; }
.proof { margin-left: auto; }
.fill-info, .pen-info { display: flex; align-items: center; gap: 3px; }
.fill-info { width: 200px; margin-left: 18px; border-right: 1px solid #d0d0d0; height: 22px; gap: 2px; }
.pen-info { margin-left: 14px; }
.chip { width: 22px; height: 22px; border: 1px solid #aaa; }
.chip + span { margin-left: 2px; }
.chip.dark { background: #231f20; }
.taskbar { height: 3px; background: linear-gradient(90deg, #00000a 388px, #33323c 388px 436px, #00000a 436px); }
```
FILE: script.js
```js
const NS = "http://www.w3.org/2000/svg";
const CM = 14.17;

function add(svg, name, attrs, text) {
  const el = document.createElementNS(NS, name);
  for (const key in attrs) el.setAttribute(key, attrs[key]);
  if (text !== undefined) el.textContent = text;
  svg.appendChild(el);
}

// Half-centimetre ticks, longer every 2.5 cm, longest and numbered every 5 cm.
function drawRuler(id, zero, from, to, lastLabel, vertical) {
  const svg = document.getElementById(id);
  for (let half = from; half <= to; half++) {
    const at = Math.round(zero + half * CM / 2);
    const len = half % 10 === 0 ? 5 : half % 5 === 0 ? 2 : 1;
    add(svg, "rect", vertical
      ? { x: 16 - len, y: at, width: len, height: 1, fill: "#888" }
      : { x: at, y: 16 - len, width: 1, height: len, fill: "#888" });
    if (half % 10 === 0 && half / 2 <= lastLabel) {
      const value = Math.abs(half / 2);
      add(svg, "text", vertical
        ? { x: 0, y: 0, transform: `translate(11 ${at - 1}) rotate(-90)` }
        : { x: at + 1, y: 10 }, value);
    }
  }
}
drawRuler("ruler-h", 662, -93, 126, 55, false);
drawRuler("ruler-v", 606, -85, 30, 10, true);
add(document.getElementById("ruler-v"), "path", { d: "M1 99.5h16", stroke: "#000", "stroke-dasharray": "3 2" });

const list = document.getElementById("mask-list");
for (let i = 0; i < 10; i++) {
  const row = document.createElement("div");
  row.className = i === 0 ? "mask-row selected" : "mask-row";
  row.innerHTML = `<input type="checkbox" aria-label="Color ${i + 1}"><span class="bar"></span><span class="num">0</span>`;
  list.appendChild(row);
}

const colors = ["#231f20", "#414042", "#58595b", "#6d6e71", "#808285", "#939598", "#a7a9ac", "#bcbec0", "#d1d3d4", "#e6e7e8", "#ffffff",
  "#2e3192", "#00aeef", "#00a651", "#fff200", "#ed1c24", "#ec008c", "#a54686", "#f58220", "#f9abae", "#7f6a62", "#c7c4e2", "#9b96ca",
  "#6b8cc7", "#766eb3", "#837ba8", "#465e89", "#504a6b", "#667b99", "#0095da", "#8ed8f8", "#a4c0d3", "#859ba8", "#667982", "#44525a",
  "#4a706c", "#3b8473", "#648e8c", "#4da18f", "#55a273", "#55c7d0", "#45a4ae", "#a7c0b1", "#cce7d4", "#9bd3ae"];
const swatches = document.getElementById("swatches");
for (const color of colors) {
  const button = document.createElement("button");
  button.style.background = color;
  button.setAttribute("aria-label", color);
  swatches.appendChild(button);
}
```
